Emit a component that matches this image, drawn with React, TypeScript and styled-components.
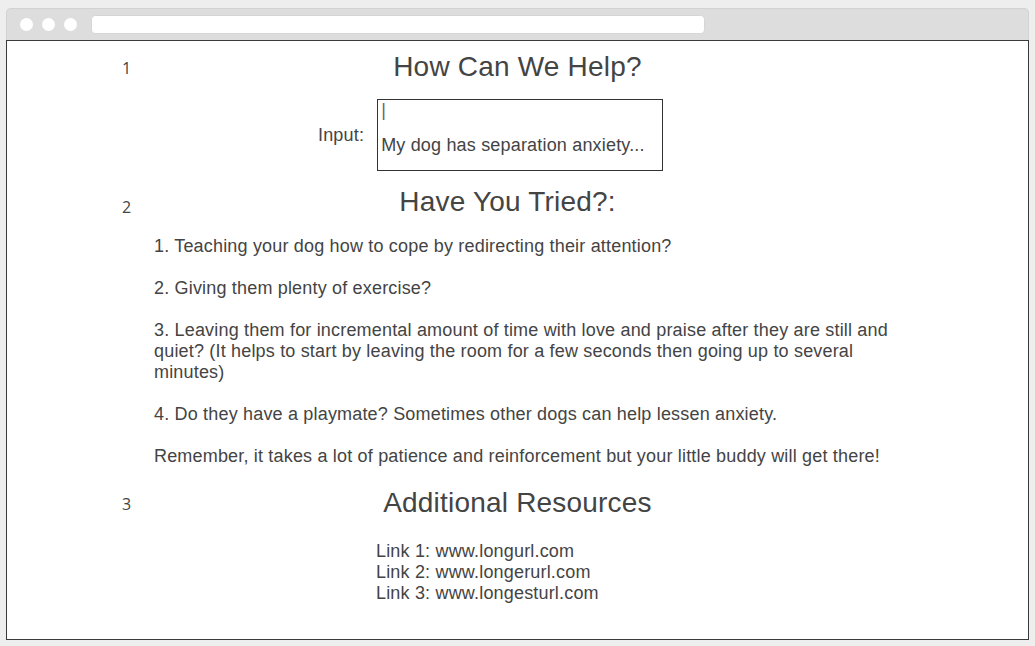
import React from "react";
import styled, { createGlobalStyle } from "styled-components";

const Global = createGlobalStyle`
  html, body { margin: 0; padding: 0; background: #eeeeee; }
  body { font-family: "Liberation Sans", Arial, sans-serif; color: #444; }
`;

const Page = styled.div`
  width: 1035px;
  height: 646px;
  padding: 8px 6px 0 6px;
  box-sizing: border-box;
`;

const Window = styled.div`
  width: 1023px;
  display: flex;
  flex-direction: column;
`;

const TitleBar = styled.div`
  height: 32px;
  box-sizing: border-box;
  background: #dddddd;
  border: 1px solid #d2d2d2;
  border-bottom: none;
  border-radius: 5px 5px 0 0;
  display: flex;
  align-items: center;
  padding-left: 13px;
  gap: 9px;
`;

const Dot = styled.span`
  width: 13px;
  height: 13px;
  border-radius: 50%;
  background: #ffffff;
`;

const UrlBar = styled.div`
  margin-left: 5px;
  width: 614px;
  height: 19px;
  background: #ffffff;
  border-radius: 4px;
  border: 1px solid #d6d6d6;
  box-sizing: border-box;
`;

const Content = styled.div`
  height: 600px;
  box-sizing: border-box;
  background: #ffffff;
  border: 1px solid #3a3a3a;
  padding-top: 10px;
  display: flex;
  flex-direction: column;
`;

const Section = styled.section<{ $top: number }>`
  display: grid;
  grid-template-columns: 147px 1fr;
  margin-top: ${(p) => p.$top}px;
`;

const Marker = styled.span<{ $dy: number }>`
  grid-row: 1;
  grid-column: 1;
  align-self: center;
  padding-left: 115px;
  margin-top: ${(p) => p.$dy}px;
  font-family: "Open Sans", "Noto Sans", sans-serif;
  font-size: 16px;
  color: #444;
`;

const Heading = styled.h2<{ $shift?: number }>`
  grid-row: 1;
  grid-column: 1 / -1;
  margin: 0;
  font-weight: normal;
  font-size: 28px;
  line-height: 32px;
  letter-spacing: 0.2px;
  text-align: center;
  padding-right: ${(p) => p.$shift ?? 0}px;
  color: #444;
`;

const Body = styled.div<{ $top: number; $indent?: number }>`
  grid-row: 2;
  grid-column: 2;
  margin-top: ${(p) => p.$top}px;
  padding-left: ${(p) => p.$indent ?? 0}px;
  font-size: 18px;
  line-height: 21px;
  letter-spacing: 0.18px;
`;

const InputRow = styled.div`
  display: flex;
  align-items: center;
  gap: 13px;
`;

const Label = styled.span`
  font-size: 18px;
  line-height: 21px;
`;

const InputBox = styled.div`
  width: 286px;
  height: 72px;
  box-sizing: border-box;
  border: 1px solid #333;
  padding: 0 3px;
  display: flex;
  flex-direction: column;
`;

const Caret = styled.div`
  color: #666;
  line-height: 21px;
`;

const Placeholder = styled.div`
  margin-top: 14px;
  line-height: 21px;
`;

const List = styled.div`
  width: 746px;
  display: flex;
  flex-direction: column;
  gap: 21px;
`;

const Item = styled.p`
  margin: 0;
`;

const Links = styled.div`
  display: flex;
  flex-direction: column;
`;

export default function App() {
  return (
    <Page>
      <Global />
      <Window>
        <TitleBar>
          <Dot />
          <Dot />
          <Dot />
          <UrlBar />
        </TitleBar>
        <Content>
          <Section $top={0}>
            <Marker $dy={2}>1</Marker>
            <Heading>How Can We Help?</Heading>
            <Body $top={16} $indent={164}>
              <InputRow>
                <Label>Input:</Label>
                <InputBox>
                  <Caret>|</Caret>
                  <Placeholder>My dog has separation anxiety...</Placeholder>
                </InputBox>
              </InputRow>
            </Body>
          </Section>
          <Section $top={15}>
            <Marker $dy={10}>2</Marker>
            <Heading $shift={20}>Have You Tried?:</Heading>
            <Body $top={18}>
              <List>
                <Item>1. Teaching your dog how to cope by redirecting their attention?</Item>
                <Item>2. Giving them plenty of exercise?</Item>
                <Item>
                  3. Leaving them for incremental amount of time with love and praise after they are still and quiet? (It helps to start by leaving the room for a few seconds then going up to several minutes)
                </Item>
                <Item>4. Do they have a playmate? Sometimes other dogs can help lessen anxiety.</Item>
                <Item>Remember, it takes a lot of patience and reinforcement but your little buddy will get there!</Item>
              </List>
            </Body>
          </Section>
          <Section $top={20}>
            <Marker $dy={2}>3</Marker>
            <Heading>Additional Resources</Heading>
            <Body $top={22} $indent={222}>
              <Links>
                <span>Link 1: www.longurl.com</span>
                <span>Link 2: www.longerurl.com</span>
                <span>Link 3: www.longesturl.com</span>
              </Links>
            </Body>
          </Section>
        </Content>
      </Window>
    </Page>
  );
}
